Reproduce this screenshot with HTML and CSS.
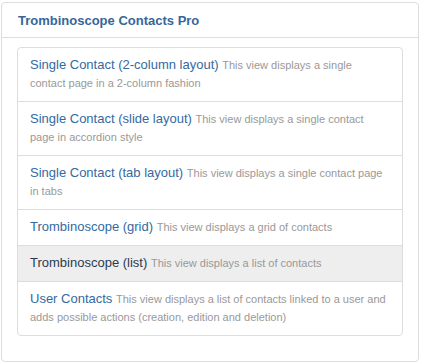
FILE: index.html
```html
<!DOCTYPE html>
<html>
<head>
<meta charset="utf-8">
<link rel="stylesheet" href="styles.css">
</head>
<body>
<div class="panel">
  <div class="panel-heading">Trombinoscope Contacts Pro</div>
  <div class="panel-body">
    <ul class="list">
      <li class="item"><span class="name">Single Contact (2-column layout)</span> <span class="desc">This view displays a single contact page in a 2-column fashion</span></li>
      <li class="item"><span class="name">Single Contact (slide layout)</span> <span class="desc">This view displays a single contact page in accordion style</span></li>
      <li class="item"><span class="name">Single Contact (tab layout)</span> <span class="desc">This view displays a single contact page in tabs</span></li>
      <li class="item"><span class="name">Trombinoscope (grid)</span> <span class="desc">This view displays a grid of contacts</span></li>
      <li class="item active"><span class="name">Trombinoscope (list)</span> <span class="desc">This view displays a list of contacts</span></li>
      <li class="item"><span class="name">User Contacts</span> <span class="desc">This view displays a list of contacts linked to a user and adds possible actions (creation, edition and deletion)</span></li>
    </ul>
  </div>
</div>
</body>
</html>
```
FILE: styles.css
```css
html, body {
  margin: 0;
  padding: 0;
  background: #fff;
}
body {
  font-family: "Liberation Sans", Arial, sans-serif;
  padding: 2px 3px 2px 1px;
}
.panel {
  border: 1px solid #dddddd;
  border-radius: 4px;
  background: #fff;
  height: 360px;
  box-sizing: border-box;
}
.panel-heading {
  height: 35px;
  box-sizing: border-box;
  border-bottom: 1px solid #dddddd;
  padding: 10px 15px 0 16px;
  font-size: 13px;
  font-weight: bold;
  color: #376699;
  line-height: 16px;
}
.panel-body {
  padding: 9px 15px 0 15px;
}
.list {
  list-style: none;
  margin: 0;
  padding: 0;
  border: 1px solid #dddddd;
  border-radius: 4px;
  overflow: hidden;
}
.item {
  padding: 8px 15px 9px 12px;
  border-top: 1px solid #dddddd;
  font-size: 13px;
  line-height: 18px;
}
.item:first-child {
  border-top: none;
}
.name {
  font-size: 13px;
  line-height: 14px;
  color: #336a9f;
}
.desc {
  font-size: 11px;
  line-height: 12px;
  color: #999999;
}
.active {
  background: #eeeeee;
}
.active .name {
  color: #2a3b4e;
}
```
